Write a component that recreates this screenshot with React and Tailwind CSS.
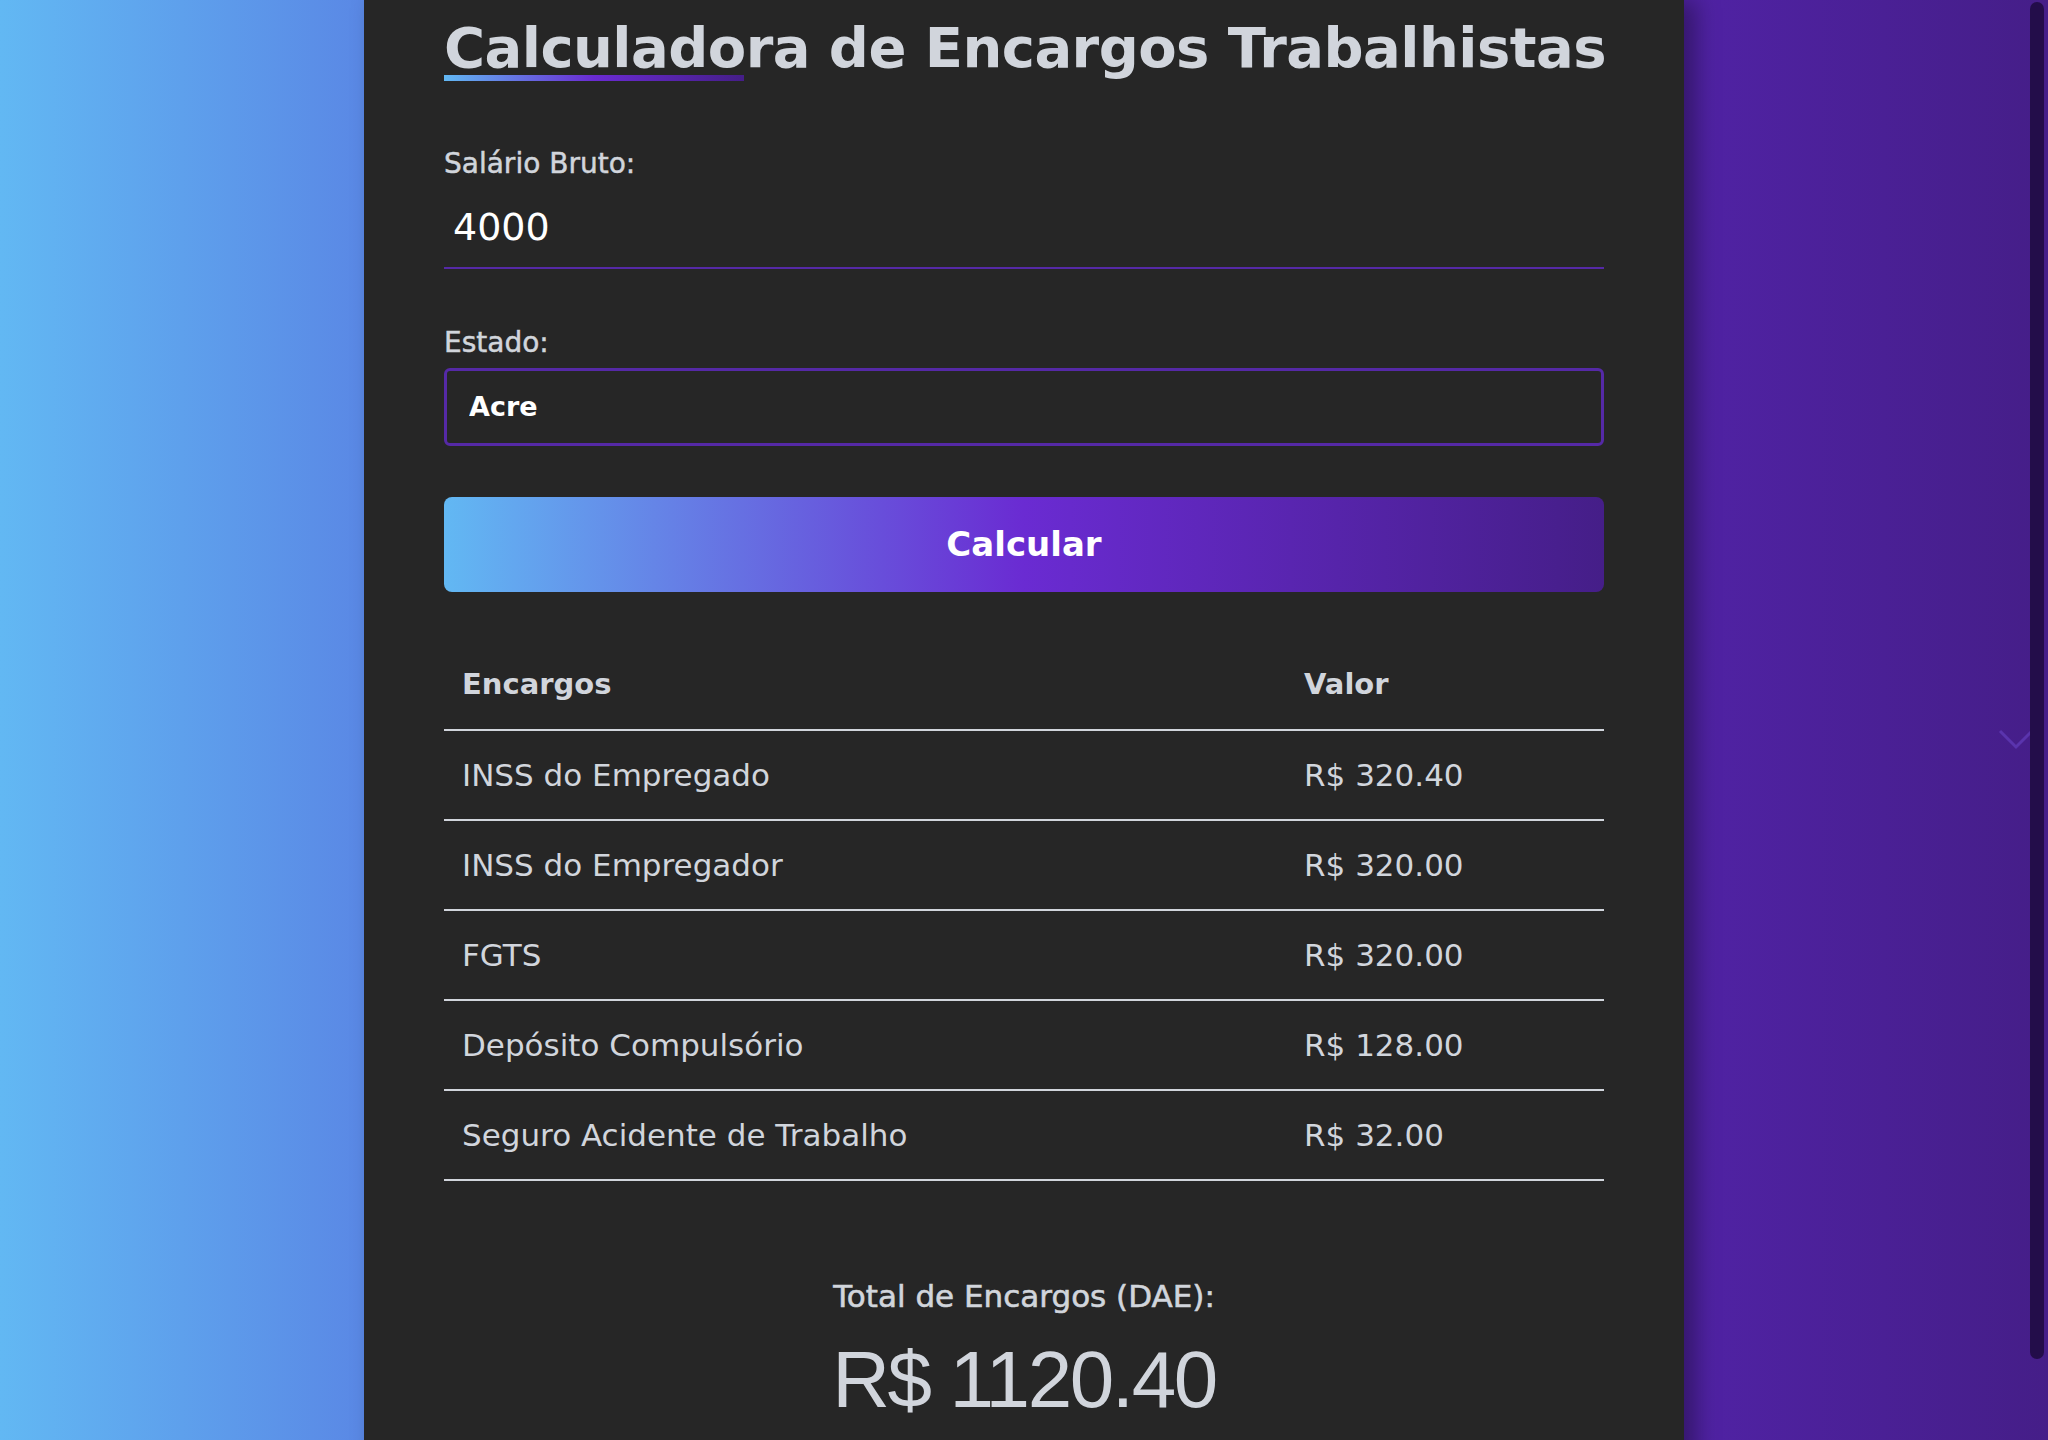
import React, { useState } from 'react';

// Encargos calculados para o salário informado
const encargos = [
  { nome: 'INSS do Empregado', valor: 320.4 },
  { nome: 'INSS do Empregador', valor: 320.0 },
  { nome: 'FGTS', valor: 320.0 },
  { nome: 'Depósito Compulsório', valor: 128.0 },
  { nome: 'Seguro Acidente de Trabalho', valor: 32.0 },
];

const estados = ['Acre', 'Alagoas', 'Amapá', 'Amazonas', 'Bahia', 'Ceará', 'Distrito Federal'];

export default function App() {
  const [salario, setSalario] = useState('4000');
  const [estado, setEstado] = useState('Acre');

  const total = encargos.reduce((soma, e) => soma + e.valor, 0);

  return (
    <div className="relative h-[1440px] overflow-hidden bg-[linear-gradient(90deg,#62b8f3_0%,#5a88e5_17.8%,#6a2bd2_50%,#4f22a2_84%,#451e88_100%)] font-['DejaVu_Sans',sans-serif]">
      <main className="mx-auto min-h-full w-[1320px] bg-[#262626] px-20 pt-[21px] pb-20 shadow-[12px_0_22px_rgba(0,0,0,0.35)]">
        {/* Título com sublinhado em degradê */}
        <h1 className="whitespace-nowrap text-[56px] font-bold leading-[54px] tracking-[-0.01em] text-gray-300">
          Calculadora de Encargos Trabalhistas
        </h1>
        <div className="h-[6px] w-[300px] bg-[linear-gradient(90deg,#62b8f3_0%,#6a2bd2_50%,#451e88_100%)]" />

        <label className="mt-[69px] block text-[28px] leading-[28px] text-gray-300 [-webkit-text-stroke:0.5px_#d1d5db]">
          Salário Bruto:
        </label>
        <input
          type="text"
          value={salario}
          onChange={(e) => setSalario(e.target.value)}
          className="mt-[9px] block h-[82px] w-full border-b-2 border-[#5529a6] bg-transparent px-[9px] text-[38px] text-white outline-none"
        />

        <label className="mt-[60px] block text-[28px] leading-[28px] text-gray-300 [-webkit-text-stroke:0.5px_#d1d5db]">
          Estado:
        </label>
        <select
          value={estado}
          onChange={(e) => setEstado(e.target.value)}
          className="mt-[11px] block h-[78px] w-full appearance-none rounded-md border-[3px] border-[#5529a6] bg-[#262626] pl-[22px] text-[27px] font-bold text-white outline-none"
        >
          {estados.map((uf) => (
            <option key={uf} value={uf}>
              {uf}
            </option>
          ))}
        </select>

        <button className="mt-[51px] block h-[95px] w-full rounded-lg bg-[linear-gradient(90deg,#62b8f3_0%,#6a2bd2_50%,#451e88_100%)] text-[34px] font-bold text-white">
          Calcular
        </button>

        {/* Tabela de encargos */}
        <div className="mt-[49px]">
          <div className="grid h-[90px] grid-cols-[842px_1fr] items-center border-b-2 border-gray-300 text-[29px] font-bold text-gray-300">
            <div className="pl-[18px]">Encargos</div>
            <div className="pl-[18px]">Valor</div>
          </div>
          {encargos.map((e) => (
            <div
              key={e.nome}
              className="grid h-[90px] grid-cols-[842px_1fr] items-center border-b-2 border-gray-300 text-[31px] text-gray-300"
            >
              <div className="pl-[18px]">{e.nome}</div>
              <div className="pl-[18px]">R$ {e.valor.toFixed(2)}</div>
            </div>
          ))}
        </div>

        <div className="mt-[100px] text-center">
          <p className="text-[31px] leading-[31px] text-gray-300 [-webkit-text-stroke:0.6px_#d1d5db]">
            Total de Encargos (DAE):
          </p>
          <p className="mt-[28px] font-['Liberation_Sans',sans-serif] text-[80px] leading-[80px] tracking-[-0.03em] text-gray-300">
            R$ {total.toFixed(2)}
          </p>
        </div>
      </main>

      {/* indicador de rolagem */}
      <svg
        className="absolute left-[1998px] top-[727px]"
        width="36"
        height="24"
        viewBox="0 0 36 24"
        fill="none"
      >
        <path d="M2 4 L18 20 L34 4" stroke="#5a34ad" strokeWidth="3" />
      </svg>

      {/* barra de rolagem */}
      <div className="absolute right-[4px] top-[2px] h-[1357px] w-[14px] rounded-full bg-[#230d4a]" />
    </div>
  );
}
